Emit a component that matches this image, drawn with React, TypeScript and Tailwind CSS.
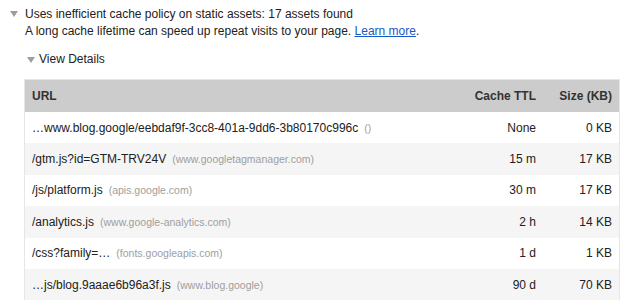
const rows = [
  { url: '…www.blog.google/eebdaf9f-3cc8-401a-9dd6-3b80170c996c', host: '()', ttl: 'None', size: '0 KB' },
  { url: '/gtm.js?id=GTM-TRV24V', host: '(www.googletagmanager.com)', ttl: '15 m', size: '17 KB' },
  { url: '/js/platform.js', host: '(apis.google.com)', ttl: '30 m', size: '17 KB' },
  { url: '/analytics.js', host: '(www.google-analytics.com)', ttl: '2 h', size: '14 KB' },
  { url: '/css?family=…', host: '(fonts.googleapis.com)', ttl: '1 d', size: '1 KB' },
  { url: '…js/blog.9aaae6b96a3f.js', host: '(www.blog.google)', ttl: '90 d', size: '70 KB' },
];

function Caret() {
  return (
    <svg width="8" height="6" viewBox="0 0 8 6" className="shrink-0">
      <path d="M0 0 H8 L4 6 Z" fill="#9e9e9e" />
    </svg>
  );
}

export default function App() {
  return (
    <div className="w-[630px] h-[304px] overflow-hidden bg-white text-[12px] text-[#212121] font-['Liberation_Sans',Arial,sans-serif]">
      <div className="pt-[6px] pl-[10px]">
        <div className="flex items-start gap-[7px]">
          <div className="pt-[5px]">
            <Caret />
          </div>
          <div className="leading-[17px]">
            <div>Uses inefficient cache policy on static assets: 17 assets found</div>
            <div>
              A long cache lifetime can speed up repeat visits to your page.{' '}
              <a href="#" className="text-[#1a57c9] underline">Learn more</a>.
            </div>
          </div>
        </div>
      </div>

      <div className="mt-[11px] ml-[27px] flex items-center gap-[4px] leading-[17px]">
        <Caret />
        <span>View Details</span>
      </div>

      <div className="mt-[11px] ml-[24px] w-[596px] border-t border-x border-[#e6e6e6]">
        <div className="grid grid-cols-[1fr_80px_75px] h-[32px] items-center bg-[#cccccc] font-bold text-[#333]">
          <div className="pl-[7px]">URL</div>
          <div className="text-right pr-[8px]">Cache TTL</div>
          <div className="text-right pr-[7px]">Size (KB)</div>
        </div>
        {rows.map((r, i) => (
          <div
            key={i}
            className={`grid grid-cols-[1fr_80px_75px] h-[31.4px] items-center ${i % 2 === 1 ? 'bg-[#f5f5f5]' : 'bg-white'}`}
          >
            <div className="pl-[7px] whitespace-nowrap">
              {r.url}
              <span className="ml-[6px] text-[10.5px] text-[#9e9e9e]">{r.host}</span>
            </div>
            <div className="text-right pr-[8px]">{r.ttl}</div>
            <div className="text-right pr-[7px]">{r.size}</div>
          </div>
        ))}
      </div>
    </div>
  );
}
